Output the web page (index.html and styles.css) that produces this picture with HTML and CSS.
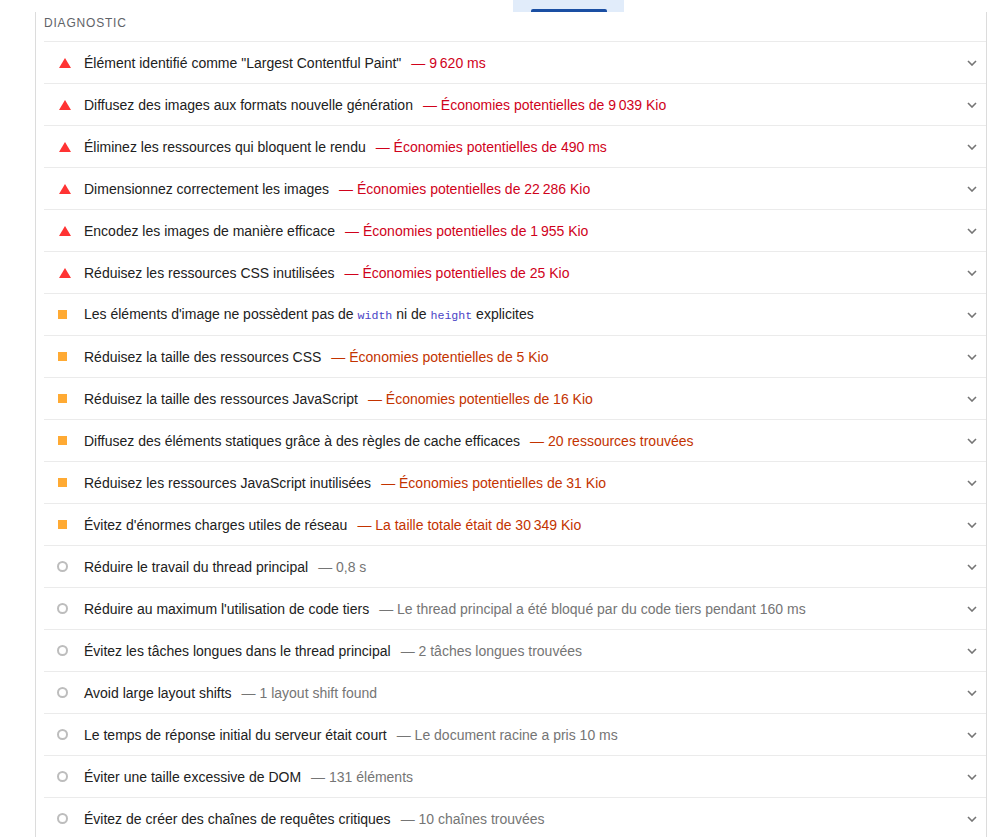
FILE: index.html
```html
<!DOCTYPE html>
<html lang="fr">
<head>
<meta charset="utf-8">
<title>Diagnostic</title>
<link rel="stylesheet" href="styles.css">
</head>
<body>
<div class="topbar">
  <div class="tab"><div class="tab-indicator"></div></div>
</div>
<div class="group">
  <div class="group-title">Diagnostic</div>

  <div class="audit fail"><span class="icon"></span><span class="title">Élément identifié comme "Largest Contentful Paint"</span><span class="display">— 9&#8239;620&nbsp;ms</span><span class="chev"><svg width="10" height="6" viewBox="0 0 10 6"><polyline points="1,1 5,5 9,1"/></svg></span></div>
  <div class="audit fail"><span class="icon"></span><span class="title">Diffusez des images aux formats nouvelle génération</span><span class="display">— Économies potentielles de 9&#8239;039&nbsp;Kio</span><span class="chev"><svg width="10" height="6" viewBox="0 0 10 6"><polyline points="1,1 5,5 9,1"/></svg></span></div>
  <div class="audit fail"><span class="icon"></span><span class="title">Éliminez les ressources qui bloquent le rendu</span><span class="display">— Économies potentielles de 490&nbsp;ms</span><span class="chev"><svg width="10" height="6" viewBox="0 0 10 6"><polyline points="1,1 5,5 9,1"/></svg></span></div>
  <div class="audit fail"><span class="icon"></span><span class="title">Dimensionnez correctement les images</span><span class="display">— Économies potentielles de 22&#8239;286&nbsp;Kio</span><span class="chev"><svg width="10" height="6" viewBox="0 0 10 6"><polyline points="1,1 5,5 9,1"/></svg></span></div>
  <div class="audit fail"><span class="icon"></span><span class="title">Encodez les images de manière efficace</span><span class="display">— Économies potentielles de 1&#8239;955&nbsp;Kio</span><span class="chev"><svg width="10" height="6" viewBox="0 0 10 6"><polyline points="1,1 5,5 9,1"/></svg></span></div>
  <div class="audit fail"><span class="icon"></span><span class="title">Réduisez les ressources CSS inutilisées</span><span class="display">— Économies potentielles de 25&nbsp;Kio</span><span class="chev"><svg width="10" height="6" viewBox="0 0 10 6"><polyline points="1,1 5,5 9,1"/></svg></span></div>

  <div class="audit average"><span class="icon"></span><span class="title">Les éléments d'image ne possèdent pas de <code>width</code> ni de <code>height</code> explicites</span><span class="chev"><svg width="10" height="6" viewBox="0 0 10 6"><polyline points="1,1 5,5 9,1"/></svg></span></div>
  <div class="audit average"><span class="icon"></span><span class="title">Réduisez la taille des ressources CSS</span><span class="display">— Économies potentielles de 5&nbsp;Kio</span><span class="chev"><svg width="10" height="6" viewBox="0 0 10 6"><polyline points="1,1 5,5 9,1"/></svg></span></div>
  <div class="audit average"><span class="icon"></span><span class="title">Réduisez la taille des ressources JavaScript</span><span class="display">— Économies potentielles de 16&nbsp;Kio</span><span class="chev"><svg width="10" height="6" viewBox="0 0 10 6"><polyline points="1,1 5,5 9,1"/></svg></span></div>
  <div class="audit average"><span class="icon"></span><span class="title">Diffusez des éléments statiques grâce à des règles de cache efficaces</span><span class="display">— 20 ressources trouvées</span><span class="chev"><svg width="10" height="6" viewBox="0 0 10 6"><polyline points="1,1 5,5 9,1"/></svg></span></div>
  <div class="audit average"><span class="icon"></span><span class="title">Réduisez les ressources JavaScript inutilisées</span><span class="display">— Économies potentielles de 31&nbsp;Kio</span><span class="chev"><svg width="10" height="6" viewBox="0 0 10 6"><polyline points="1,1 5,5 9,1"/></svg></span></div>
  <div class="audit average"><span class="icon"></span><span class="title">Évitez d'énormes charges utiles de réseau</span><span class="display">— La taille totale était de 30&#8239;349&nbsp;Kio</span><span class="chev"><svg width="10" height="6" viewBox="0 0 10 6"><polyline points="1,1 5,5 9,1"/></svg></span></div>

  <div class="audit info"><span class="icon"></span><span class="title">Réduire le travail du thread principal</span><span class="display">— 0,8&nbsp;s</span><span class="chev"><svg width="10" height="6" viewBox="0 0 10 6"><polyline points="1,1 5,5 9,1"/></svg></span></div>
  <div class="audit info"><span class="icon"></span><span class="title">Réduire au maximum l'utilisation de code tiers</span><span class="display">— Le thread principal a été bloqué par du code tiers pendant 160&nbsp;ms</span><span class="chev"><svg width="10" height="6" viewBox="0 0 10 6"><polyline points="1,1 5,5 9,1"/></svg></span></div>
  <div class="audit info"><span class="icon"></span><span class="title">Évitez les tâches longues dans le thread principal</span><span class="display">— 2 tâches longues trouvées</span><span class="chev"><svg width="10" height="6" viewBox="0 0 10 6"><polyline points="1,1 5,5 9,1"/></svg></span></div>
  <div class="audit info"><span class="icon"></span><span class="title">Avoid large layout shifts</span><span class="display">— 1 layout shift found</span><span class="chev"><svg width="10" height="6" viewBox="0 0 10 6"><polyline points="1,1 5,5 9,1"/></svg></span></div>
  <div class="audit info"><span class="icon"></span><span class="title">Le temps de réponse initial du serveur était court</span><span class="display">— Le document racine a pris 10&nbsp;ms</span><span class="chev"><svg width="10" height="6" viewBox="0 0 10 6"><polyline points="1,1 5,5 9,1"/></svg></span></div>
  <div class="audit info"><span class="icon"></span><span class="title">Éviter une taille excessive de DOM</span><span class="display">— 131 éléments</span><span class="chev"><svg width="10" height="6" viewBox="0 0 10 6"><polyline points="1,1 5,5 9,1"/></svg></span></div>
  <div class="audit info"><span class="icon"></span><span class="title">Évitez de créer des chaînes de requêtes critiques</span><span class="display">— 10 chaînes trouvées</span><span class="chev"><svg width="10" height="6" viewBox="0 0 10 6"><polyline points="1,1 5,5 9,1"/></svg></span></div>
</div>
</body>
</html>
```

FILE: styles.css
```css
html, body {
  margin: 0;
  padding: 0;
  background: #ffffff;
  font-family: "Liberation Sans", Arial, sans-serif;
  color: #212121;
  overflow: hidden;
}

.topbar {
  height: 12px;
  display: flex;
  padding-left: 513px;
}

.tab {
  width: 111px;
  height: 12px;
  background: #e1ecfa;
  display: flex;
  align-items: flex-end;
  justify-content: center;
}

.tab-indicator {
  width: 76px;
  height: 3px;
  background: #1a4fa3;
  border-radius: 2px 2px 0 0;
}

.group {
  margin-left: 35px;
  width: 942px;
  padding: 0 0 0 8px;
  border-left: 1px solid #dcdcdc;
  border-right: 1px solid #dcdcdc;
  min-height: 900px;
}

.group-title {
  height: 29px;
  padding-top: 3px;
  box-sizing: border-box;
  font-size: 12px;
  line-height: 16px;
  text-transform: uppercase;
  letter-spacing: 0.8px;
  color: #5f6368;
}

.audit {
  height: 42px;
  box-sizing: border-box;
  border-top: 1px solid #ebebeb;
  display: flex;
  align-items: center;
  padding: 0 9px 0 13px;
  font-size: 14px;
  line-height: 20px;
  white-space: nowrap;
}

.icon {
  width: 14px;
  height: 14px;
  margin-right: 13px;
  flex: none;
  display: flex;
  align-items: center;
  justify-content: center;
  box-sizing: border-box;
}

.fail .icon::before {
  content: "";
  width: 0;
  height: 0;
  border-left: 6px solid transparent;
  border-right: 6px solid transparent;
  border-bottom: 10px solid #ff3333;
  margin-left: 1px;
}

.average .icon::before {
  content: "";
  width: 9px;
  height: 9px;
  background: #ffaa33;
  margin-left: -4px;
}

.info .icon::before {
  content: "";
  width: 11px;
  height: 11px;
  box-sizing: border-box;
  border: 2px solid #bdbdbd;
  border-radius: 50%;
  margin-left: -3px;
}

.title code {
  font-family: "Liberation Mono", monospace;
  font-size: 11.6px;
  color: #4a44c6;
}

.display {
  margin-left: 10px;
}

.fail .display {
  color: #d0021b;
}

.average .display {
  color: #c33300;
}

.info .display {
  color: #757575;
}

.chev {
  margin-left: auto;
  display: flex;
  align-items: center;
}

.chev svg {
  display: block;
}

.chev polyline {
  fill: none;
  stroke: #757575;
  stroke-width: 1.6;
}
```
